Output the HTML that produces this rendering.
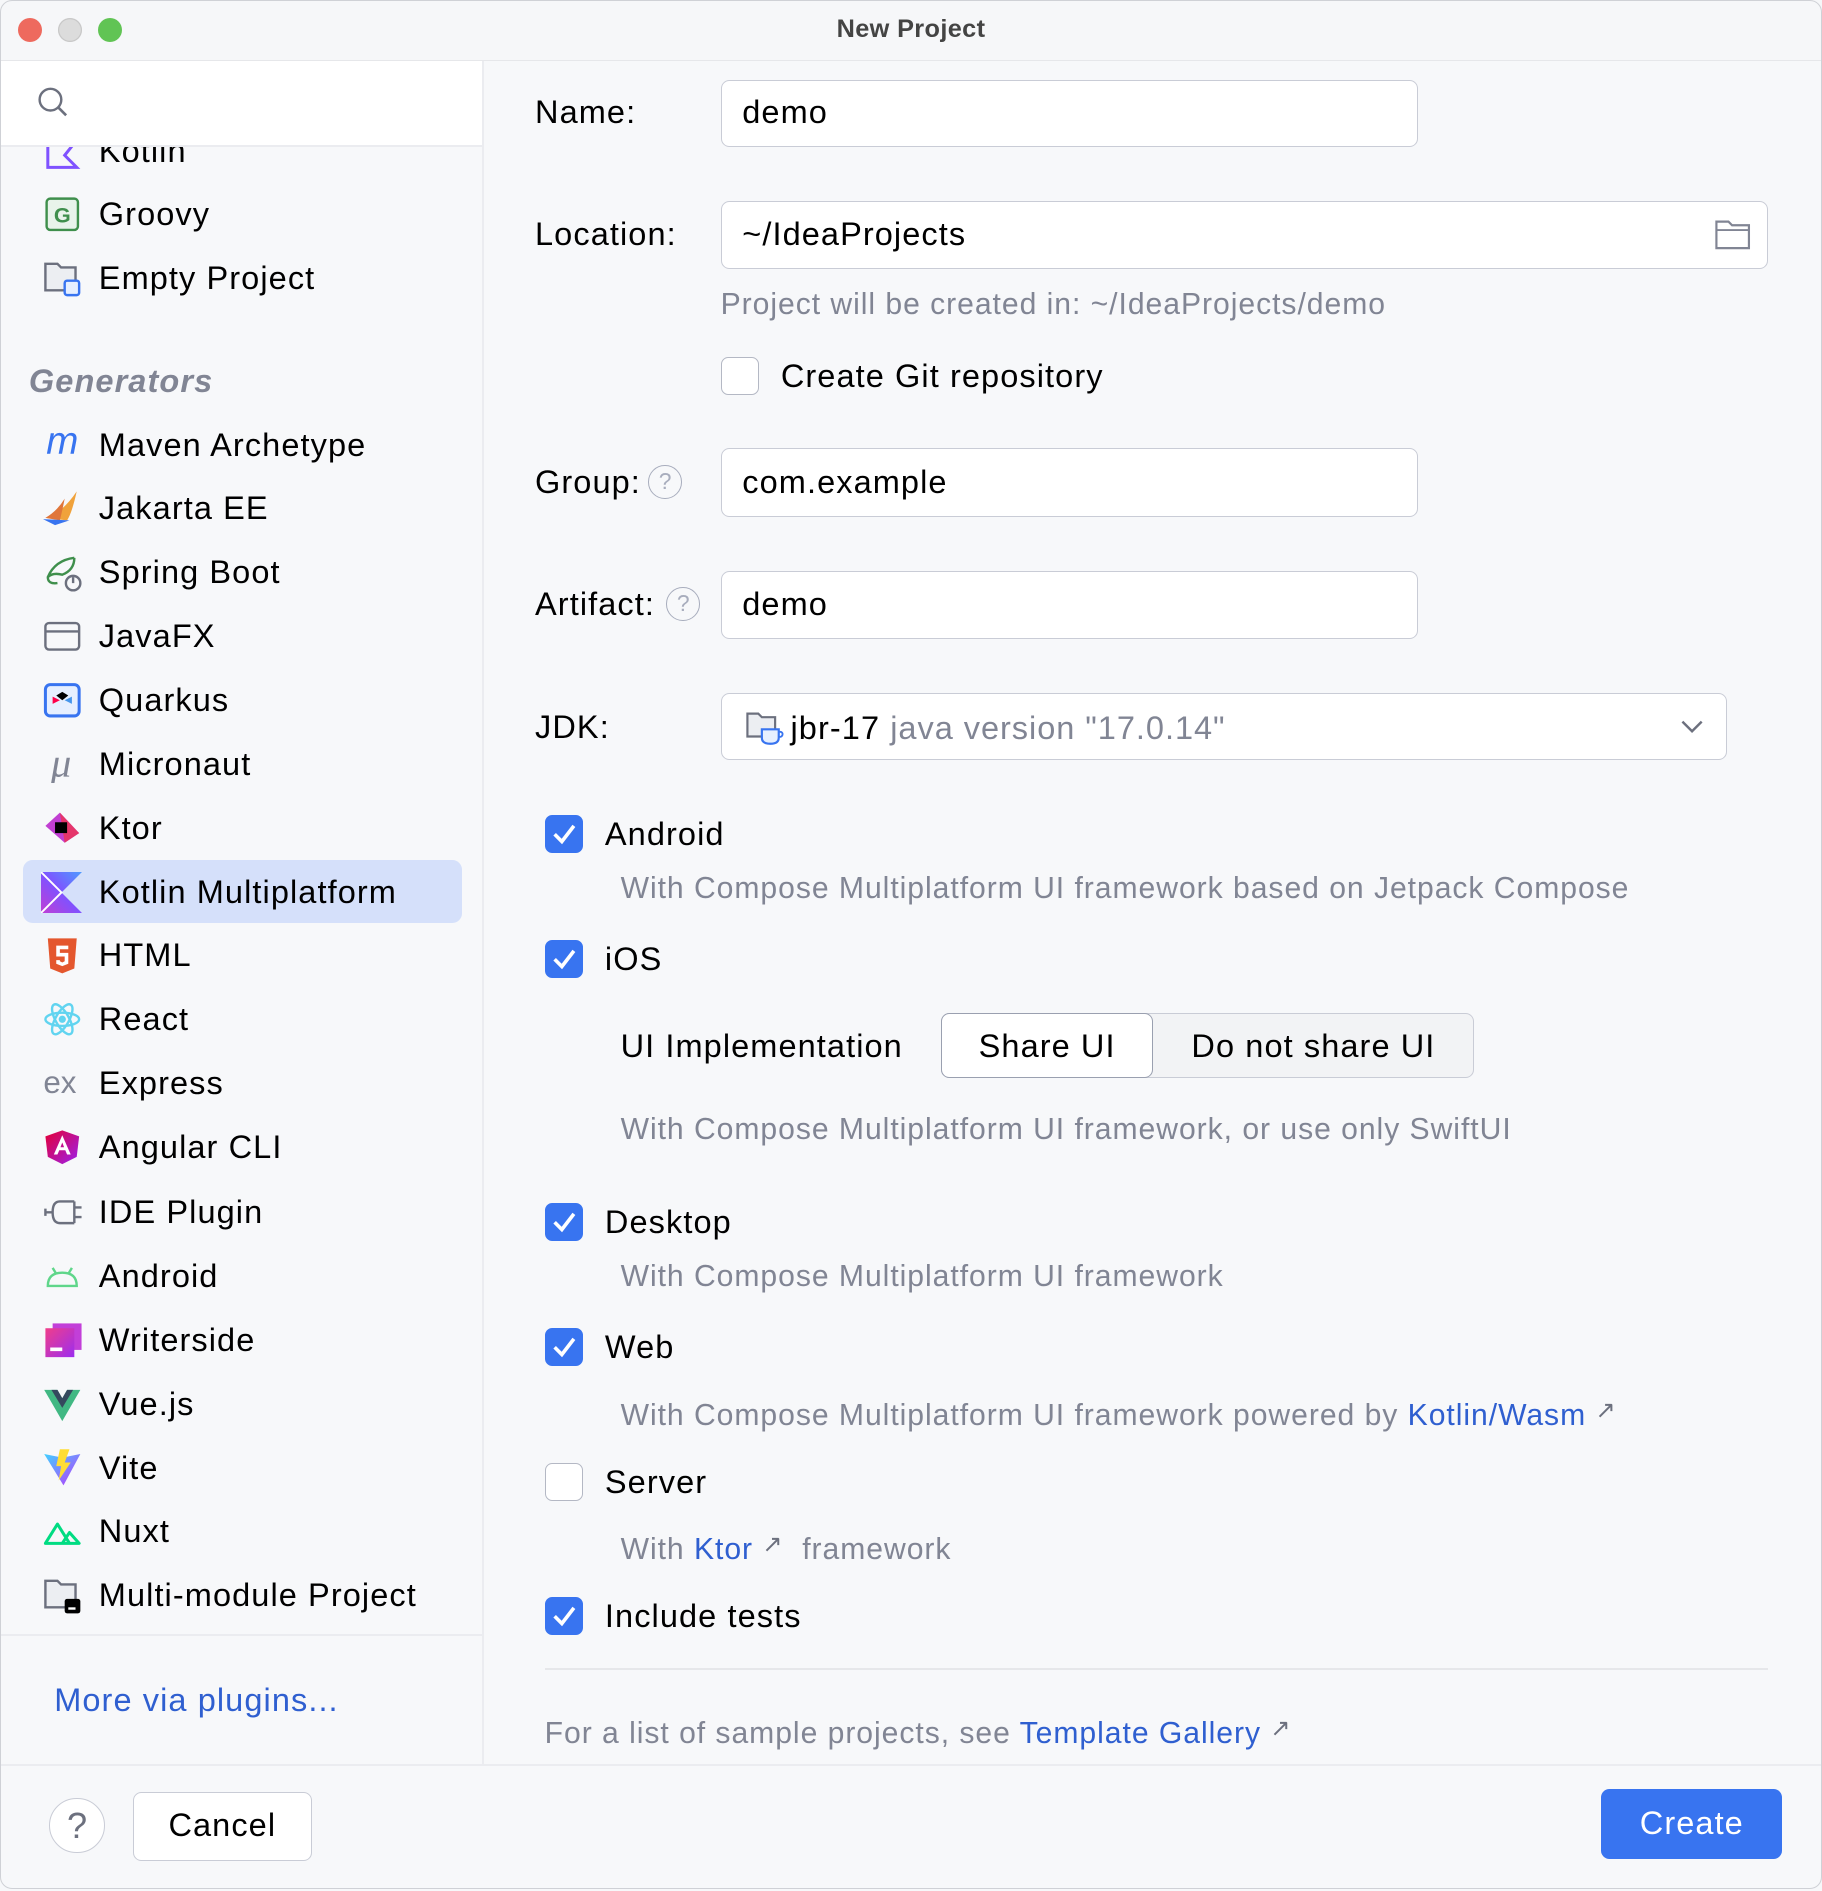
<!DOCTYPE html>
<html><head><meta charset="utf-8"><style>
html,body{margin:0;padding:0;}
body{width:1512px;height:1568px;zoom:1.205;overflow:hidden;font-family:"Liberation Sans",sans-serif;background:#f7f8fa;position:relative;color:#000;}
.a{position:absolute;white-space:nowrap;line-height:40px;font-size:27px;letter-spacing:0.9px;}
.g{color:#818594;letter-spacing:0.8px;}
.l{color:#2f5fd0;}
.box{position:absolute;background:#fff;border:1.5px solid #c9ccd6;border-radius:7px;box-sizing:border-box;}
.cb{position:absolute;width:32px;height:32px;border-radius:6px;background:#3874f0;box-sizing:border-box;}
.cb.off{background:#fff;border:1.5px solid #b4b8c4;}
.ic{position:absolute;left:36px;width:32px;height:32px;}
</style></head><body>
<div style="position:absolute;left:0;top:0;width:1512px;height:1568px;border:1px solid #cfd1d6;box-sizing:border-box;border-radius:10px;pointer-events:none;z-index:5"></div>
<div style="position:absolute;left:0;top:0;width:1512px;height:50px;background:#f6f7f9;border-bottom:1px solid #e6e7ea;"></div>
<div style="position:absolute;left:15px;top:15px;width:20px;height:20px;border-radius:50%;background:#ee6a5e"></div>
<div style="position:absolute;left:48px;top:15px;width:20px;height:20px;border-radius:50%;background:#dcdcdc;box-shadow:inset 0 0 0 1px #c8c8c8"></div>
<div style="position:absolute;left:81px;top:15px;width:20px;height:20px;border-radius:50%;background:#61c454"></div>
<div class="a" style="left:0;width:1512px;text-align:center;top:4px;font-size:21px;font-weight:bold;color:#444;letter-spacing:0.3px">New Project</div>

<div style="position:absolute;left:0;top:51px;width:400px;height:1413px;background:#f7f8fa;border-right:2px solid #ebecf0;"></div>
<div style="position:absolute;left:0;top:51px;width:400px;height:69px;background:#fff;border-bottom:2px solid #ebecf0;z-index:2"></div>
<svg style="position:absolute;left:30px;top:70px;z-index:3" width="28" height="30" viewBox="0 0 28 30"><circle cx="12" cy="13" r="9" fill="none" stroke="#6c707e" stroke-width="2"/><path d="M18.5 19.5 L25 26" stroke="#6c707e" stroke-width="2.2"/></svg>

<div class="a" style="left:82px;top:105px;">Kotlin</div>
<svg class="ic" style="top:113px" viewBox="0 0 32 32"><path d="M4 2 V26 H28 L18 16 L26 6" fill="none" stroke="#7f52ff" stroke-width="2.5"/></svg>
<svg class="ic" style="top:162px" viewBox="0 0 32 32"><rect x="3" y="3" width="26" height="26" rx="3" fill="#e8f3ea" stroke="#3f8f4c" stroke-width="2"/><text x="16" y="23" font-size="18" font-family="Liberation Sans" font-weight="bold" fill="#3f8f4c" text-anchor="middle">G</text></svg>
<div class="a" style="left:82px;top:158px;">Groovy</div>
<svg class="ic" style="top:215px" viewBox="0 0 32 32"><path d="M2 4 H12 L15 7 H27 V26 H2 Z" fill="#eceef2" stroke="#6c707e" stroke-width="2"/><rect x="18" y="18" width="12" height="12" rx="2" fill="#e6efff" stroke="#3874f0" stroke-width="2"/></svg>
<div class="a" style="left:82px;top:211px;">Empty Project</div>

<div class="a" style="left:24px;top:296px;font-weight:bold;font-style:italic;color:#818594;">Generators</div>

<div style="position:absolute;left:19px;top:714px;width:364px;height:52px;border-radius:8px;background:#d5e0fa"></div>

<svg class="ic" style="top:353px" viewBox="0 0 32 32"><text x="16" y="24" font-size="32" font-family="Liberation Sans" font-style="italic" fill="#3874f0" text-anchor="middle">m</text></svg>
<div class="a" style="left:82px;top:349px;">Maven Archetype</div>
<svg class="ic" style="top:406px" viewBox="0 0 32 32"><path d="M2 24 Q16 20 28 2 Q24 20 20 26 Z" fill="#f0a23b"/><path d="M2 24 Q12 18 18 8 Q16 18 14 26 Z" fill="#e0763a"/><path d="M0 25 L22 26 L10 30 Z" fill="#3874f0"/></svg>
<div class="a" style="left:82px;top:402px;">Jakarta EE</div>
<svg class="ic" style="top:459px" viewBox="0 0 32 32"><path d="M26 4 Q10 6 4 20 Q4 26 12 25 M4 20 Q8 16 16 18 Q26 14 26 4" fill="none" stroke="#3f8f4c" stroke-width="2"/><circle cx="25" cy="25" r="6" fill="#f7f8fa" stroke="#6c707e" stroke-width="2"/><path d="M25 20 V25" stroke="#6c707e" stroke-width="2"/></svg>
<div class="a" style="left:82px;top:455px;">Spring Boot</div>
<svg class="ic" style="top:512px" viewBox="0 0 32 32"><rect x="2" y="5" width="28" height="22" rx="3" fill="none" stroke="#6c707e" stroke-width="2"/><path d="M2 12 H30" stroke="#6c707e" stroke-width="2"/></svg>
<div class="a" style="left:82px;top:508px;">JavaFX</div>
<svg class="ic" style="top:565px" viewBox="0 0 32 32"><rect x="2" y="3" width="28" height="26" rx="4" fill="#e6efff" stroke="#3874f0" stroke-width="2.5"/><path d="M11 12 L16 9 L21 12 L16 16 Z" fill="#000"/><path d="M8 13 L14 16 L8 19Z" fill="#ff004a"/><path d="M24 13 L18 16 L24 19Z" fill="#4695eb"/></svg>
<div class="a" style="left:82px;top:561px;">Quarkus</div>
<svg class="ic" style="top:618px" viewBox="0 0 32 32"><text x="15" y="26" font-size="34" font-family="Liberation Serif" font-style="italic" fill="#818594" text-anchor="middle">μ</text></svg>
<div class="a" style="left:82px;top:614px;">Micronaut</div>
<svg class="ic" style="top:671px" viewBox="0 0 32 32"><path d="M2 14 L14 3 L30 20 L18 28 Z" fill="#c13fd2"/><path d="M14 3 L30 20 L18 28 Z" fill="#e5366b"/><rect x="10" y="11" width="10" height="9" fill="#000"/></svg>
<div class="a" style="left:82px;top:667px;">Ktor</div>
<svg class="ic" style="top:724px;left:34px;width:34px;height:34px" viewBox="0 0 32 32"><defs><linearGradient id="km" x1="0" y1="1" x2="1" y2="0"><stop offset="0" stop-color="#c03fd5"/><stop offset=".5" stop-color="#7f52ff"/><stop offset="1" stop-color="#4e9bff"/></linearGradient></defs><path d="M0 0 H32 L16 16 L32 32 H0 Z" fill="url(#km)"/><path d="M0 0 L16 16 L0 32" fill="none" stroke="#fff" stroke-width="1.5"/></svg>
<div class="a" style="left:82px;top:720px;">Kotlin Multiplatform</div>
<svg class="ic" style="top:777px" viewBox="0 0 32 32"><path d="M4 2 H28 L26 27 L16 31 L6 27 Z" fill="#e4572e"/><path d="M11 8 H21 V11 H14 V14 H21 V23 L16 25 L11 23 V20 H14 V21 L16 22 L18 21 V17 H11 Z" fill="#fff"/></svg>
<div class="a" style="left:82px;top:773px;">HTML</div>
<svg class="ic" style="top:830px" viewBox="0 0 32 32"><g fill="none" stroke="#61d4f0" stroke-width="2"><ellipse cx="16" cy="16" rx="14" ry="5.5"/><ellipse cx="16" cy="16" rx="14" ry="5.5" transform="rotate(60 16 16)"/><ellipse cx="16" cy="16" rx="14" ry="5.5" transform="rotate(120 16 16)"/></g><circle cx="16" cy="16" r="3" fill="#61d4f0"/></svg>
<div class="a" style="left:82px;top:826px;">React</div>
<div class="a" style="left:36px;top:879px;color:#818594;font-size:26px;letter-spacing:0">ex</div>
<div class="a" style="left:82px;top:879px;">Express</div>
<svg class="ic" style="top:936px" viewBox="0 0 32 32"><defs><linearGradient id="ng" x1="0" y1="0" x2="1" y2="1"><stop offset="0" stop-color="#e40035"/><stop offset="1" stop-color="#9c20ee"/></linearGradient></defs><path d="M16 2 L30 7 L28 24 L16 30 L4 24 L2 7 Z" fill="url(#ng)"/><path d="M16 6 L23 22 H20 L18.5 18.5 H13.5 L12 22 H9 Z M14.5 16 H17.5 L16 12 Z" fill="#fff"/></svg>
<div class="a" style="left:82px;top:932px;">Angular CLI</div>
<svg class="ic" style="top:990px" viewBox="0 0 32 32"><path d="M14 7 H26 M14 25 H26 M26 12 H32 M26 20 H32 M14 7 Q8 7 8 16 Q8 25 14 25 M8 16 H2 M2 13 V19" fill="none" stroke="#6c707e" stroke-width="2"/><path d="M26 7 V25" stroke="#6c707e" stroke-width="2"/></svg>
<div class="a" style="left:82px;top:986px;">IDE Plugin</div>
<svg class="ic" style="top:1043px" viewBox="0 0 32 32"><path d="M4 24 Q4 13 16 13 Q28 13 28 24 Z" fill="none" stroke="#5fd68a" stroke-width="2"/><path d="M8 9 L11 14 M24 9 L21 14" stroke="#5fd68a" stroke-width="2"/></svg>
<div class="a" style="left:82px;top:1039px;">Android</div>
<svg class="ic" style="top:1096px" viewBox="0 0 32 32"><defs><linearGradient id="ws" x1="0" y1="0" x2="1" y2="1"><stop offset="0" stop-color="#f03e8a"/><stop offset="1" stop-color="#9c2df0"/></linearGradient></defs><rect x="8" y="2" width="24" height="22" fill="#c23fd8"/><rect x="2" y="6" width="24" height="24" fill="url(#ws)"/><rect x="6" y="22" width="10" height="3" fill="#fff"/></svg>
<div class="a" style="left:82px;top:1092px;">Writerside</div>
<svg class="ic" style="top:1149px" viewBox="0 0 32 32"><path d="M1 4 H12 L16 11 L20 4 H31 L16 30 Z" fill="#41b883"/><path d="M7 4 H12 L16 11 L20 4 H25 L16 19 Z" fill="#35495e"/></svg>
<div class="a" style="left:82px;top:1145px;">Vue.js</div>
<svg class="ic" style="top:1202px" viewBox="0 0 32 32"><defs><linearGradient id="vt" x1="0" y1="0" x2="1" y2="1"><stop offset="0" stop-color="#41d1ff"/><stop offset="1" stop-color="#bd34fe"/></linearGradient></defs><path d="M1 5 L16 8 L31 5 L17 31 Z" fill="url(#vt)"/><path d="M14 1 L22 1 L18 12 H23 L13 27 L15 15 H11 Z" fill="#ffdd35"/></svg>
<div class="a" style="left:82px;top:1198px;">Vite</div>
<svg class="ic" style="top:1255px" viewBox="0 0 32 32"><path d="M2 26 L12 10 L22 26 Z M16 26 L22 17 L30 26 Z" fill="none" stroke="#00dc82" stroke-width="2.5" stroke-linejoin="round"/></svg>
<div class="a" style="left:82px;top:1251px;">Nuxt</div>
<svg class="ic" style="top:1308px" viewBox="0 0 32 32"><path d="M2 4 H12 L15 7 H27 V26 H2 Z" fill="#eceef2" stroke="#6c707e" stroke-width="2"/><rect x="18" y="19" width="13" height="12" rx="2" fill="#000"/><rect x="21" y="26" width="6" height="2" fill="#fff"/></svg>
<div class="a" style="left:82px;top:1304px;">Multi-module Project</div>

<div style="position:absolute;left:0;top:1356px;width:400px;height:2px;background:#ebecf0"></div>
<div class="a l" style="left:45px;top:1391px;">More via plugins...</div>

<div style="position:absolute;left:0;top:1464px;width:1512px;height:104px;background:#f7f8fa;border-top:2px solid #ebecf0;"></div>
<div style="position:absolute;left:41px;top:1492px;width:46px;height:46px;border-radius:50%;border:1.5px solid #c9ccd6;background:#fff;box-sizing:border-box;text-align:center;line-height:44px;font-size:30px;color:#6c707e">?</div>
<div class="box" style="left:110px;top:1487px;width:149px;height:57px;text-align:center;line-height:54px;font-size:27px;letter-spacing:0.9px">Cancel</div>
<div style="position:absolute;left:1329px;top:1485px;width:150px;height:58px;border-radius:7px;background:#3874f0;color:#fff;text-align:center;line-height:58px;font-size:27px;letter-spacing:0.9px">Create</div>

<div class="a" style="left:444px;top:73px;">Name:</div>
<div class="box" style="left:598px;top:66px;width:579px;height:56px;"></div>
<div class="a" style="left:616px;top:73px;">demo</div>

<div class="a" style="left:444px;top:174px;">Location:</div>
<div class="box" style="left:598px;top:167px;width:869px;height:56px;"></div>
<div class="a" style="left:616px;top:174px;">~/IdeaProjects</div>
<svg style="position:absolute;left:1422px;top:181px" width="32" height="28" viewBox="0 0 32 28"><path d="M2 3 H12 L15 6 H29 V25 H2 Z" fill="none" stroke="#818594" stroke-width="1.8"/><path d="M2 10 H29" stroke="#818594" stroke-width="1.5"/></svg>
<div class="a g" style="left:598px;top:233px;font-size:25px;">Project will be created in: ~/IdeaProjects/demo</div>
<div class="cb off" style="left:598px;top:296px;"></div>
<div class="a" style="left:648px;top:292px;">Create Git repository</div>

<div class="a" style="left:444px;top:380px;">Group:</div>
<div style="position:absolute;left:538px;top:386px;width:28px;height:28px;border-radius:50%;border:1.5px solid #a8adbd;box-sizing:border-box;text-align:center;line-height:26px;font-size:19px;color:#a8adbd">?</div>
<div class="box" style="left:598px;top:372px;width:579px;height:57px;"></div>
<div class="a" style="left:616px;top:380px;">com.example</div>

<div class="a" style="left:444px;top:481px;">Artifact:</div>
<div style="position:absolute;left:553px;top:487px;width:28px;height:28px;border-radius:50%;border:1.5px solid #a8adbd;box-sizing:border-box;text-align:center;line-height:26px;font-size:19px;color:#a8adbd">?</div>
<div class="box" style="left:598px;top:474px;width:579px;height:56px;"></div>
<div class="a" style="left:616px;top:481px;">demo</div>

<div class="a" style="left:444px;top:583px;">JDK:</div>
<div class="box" style="left:598px;top:575px;width:835px;height:56px;"></div>
<svg style="position:absolute;left:618px;top:589px" width="34" height="30" viewBox="0 0 34 30"><path d="M2 3 H11 L14 6 H25 V22 H2 Z" fill="#eceef2" stroke="#6c707e" stroke-width="1.8"/><path d="M14 16 H28 V23 Q28 28 21 28 Q14 28 14 23 Z" fill="#e6efff" stroke="#3874f0" stroke-width="1.8"/><path d="M28 18 Q32 18 31 21 Q30 23 28 22" fill="none" stroke="#3874f0" stroke-width="1.5"/></svg>
<div class="a" style="left:656px;top:584px;">jbr-17 <span class="g">java version "17.0.14"</span></div>
<svg style="position:absolute;left:1394px;top:596px" width="20" height="14" viewBox="0 0 20 14"><path d="M2 3 L10 11 L18 3" fill="none" stroke="#6c707e" stroke-width="2"/></svg>

<div class="cb" style="left:452px;top:676px;"><svg width="32" height="32" viewBox="0 0 32 32"><path d="M8 16 L14 22 L24 9" fill="none" stroke="#fff" stroke-width="3"/></svg></div>
<div class="a" style="left:502px;top:672px;">Android</div>
<div class="a g" style="left:515px;top:718px;font-size:25px;">With Compose Multiplatform UI framework based on Jetpack Compose</div>

<div class="cb" style="left:452px;top:780px;"><svg width="32" height="32" viewBox="0 0 32 32"><path d="M8 16 L14 22 L24 9" fill="none" stroke="#fff" stroke-width="3"/></svg></div>
<div class="a" style="left:502px;top:776px;">iOS</div>
<div class="a" style="left:515px;top:848px;">UI Implementation</div>
<div style="position:absolute;left:781px;top:841px;width:442px;height:54px;border:1.5px solid #c9ccd6;border-radius:7px;box-sizing:border-box;background:#f2f3f5"></div>
<div style="position:absolute;left:781px;top:841px;width:176px;height:54px;border:1.5px solid #9aa0b0;border-radius:7px;box-sizing:border-box;background:#fff"></div>
<div class="a" style="left:781px;width:176px;text-align:center;top:848px;">Share UI</div>
<div class="a" style="left:957px;width:266px;text-align:center;top:848px;">Do not share UI</div>
<div class="a g" style="left:515px;top:918px;font-size:25px;">With Compose Multiplatform UI framework, or use only SwiftUI</div>

<div class="cb" style="left:452px;top:998px;"><svg width="32" height="32" viewBox="0 0 32 32"><path d="M8 16 L14 22 L24 9" fill="none" stroke="#fff" stroke-width="3"/></svg></div>
<div class="a" style="left:502px;top:994px;">Desktop</div>
<div class="a g" style="left:515px;top:1040px;font-size:25px;">With Compose Multiplatform UI framework</div>

<div class="cb" style="left:452px;top:1102px;"><svg width="32" height="32" viewBox="0 0 32 32"><path d="M8 16 L14 22 L24 9" fill="none" stroke="#fff" stroke-width="3"/></svg></div>
<div class="a" style="left:502px;top:1098px;">Web</div>
<div class="a g" style="left:515px;top:1151px;font-size:25px;">With Compose Multiplatform UI framework powered by <span class="l">Kotlin/Wasm</span> <span style="color:#6c707e;font-size:20px;vertical-align:6px">↗</span></div>

<div class="cb off" style="left:452px;top:1214px;"></div>
<div class="a" style="left:502px;top:1210px;">Server</div>
<div class="a g" style="left:515px;top:1262px;font-size:25px;">With <span class="l">Ktor</span> <span style="color:#6c707e;font-size:20px;vertical-align:6px">↗</span>&nbsp; framework</div>

<div class="cb" style="left:452px;top:1325px;"><svg width="32" height="32" viewBox="0 0 32 32"><path d="M8 16 L14 22 L24 9" fill="none" stroke="#fff" stroke-width="3"/></svg></div>
<div class="a" style="left:502px;top:1321px;">Include tests</div>

<div style="position:absolute;left:452px;top:1384px;width:1015px;height:1.5px;background:#e6e7ea"></div>
<div class="a g" style="left:452px;top:1415px;font-size:25px;">For a list of sample projects, see <span class="l">Template Gallery</span> <span style="color:#6c707e;font-size:20px;vertical-align:6px">↗</span></div>
</body></html>
